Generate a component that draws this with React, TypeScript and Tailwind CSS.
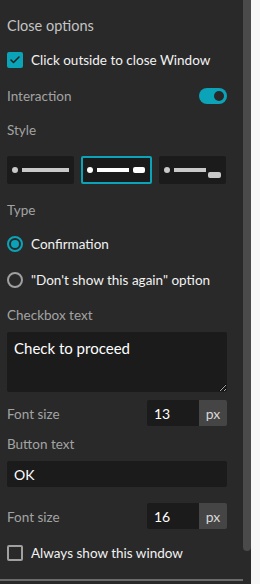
import { Check } from "lucide-react";

const font = { fontFamily: "Lato, 'Noto Sans', sans-serif" };

function StyleOption({ variant, selected }: { variant: 1 | 2 | 3; selected?: boolean }) {
  const c = selected ? "bg-white" : "bg-[#c9c9c9]";
  return (
    <div
      className={`relative h-[28px] rounded-[2px] bg-[#1b1b1b] ${
        selected ? "border-2 border-[#0ba3b8]" : ""
      }`}
    >
      {variant === 1 && (
        <div className="flex h-full items-center px-[5px] gap-[4px]">
          <span className={`h-[6px] w-[6px] rounded-full ${c}`} />
          <span className={`h-[4px] flex-1 ${c}`} />
        </div>
      )}
      {variant === 2 && (
        <div className="flex h-full items-center pl-[4px] pr-[5px] gap-[4px]">
          <span className={`h-[6px] w-[6px] rounded-full ${c}`} />
          <span className={`h-[4px] w-[32px] ${c}`} />
          <span className={`ml-auto h-[6px] w-[12px] rounded-[2px] ${c}`} />
        </div>
      )}
      {variant === 3 && (
        <>
          <div className="flex h-full items-center px-[5px] gap-[4px]">
            <span className={`h-[6px] w-[6px] rounded-full ${c}`} />
            <span className={`h-[4px] w-[32px] ${c}`} />
          </div>
          <span className={`absolute right-[5px] bottom-[6px] h-[6px] w-[13px] rounded-[2px] ${c}`} />
        </>
      )}
    </div>
  );
}

function Label({ children, className = "" }: { children: React.ReactNode; className?: string }) {
  return <div className={`h-[20px] flex items-center text-[13.5px] text-[#a3a3a3] ${className}`}>{children}</div>;
}

function FontSizeRow({ value, className = "" }: { value: string; className?: string }) {
  return (
    <div className={`flex h-[26px] items-center ${className}`}>
      <span className="text-[13.5px] text-[#a3a3a3] pt-[2px]">Font size</span>
      <div className="ml-auto flex h-full w-[80px] rounded-[2px] overflow-hidden">
        <div className="flex flex-1 items-center bg-[#1b1b1b] pl-[7px] text-[14px] text-white">{value}</div>
        <div className="flex w-[28px] items-center justify-center bg-[#454545] text-[14px] text-[#d8d8d8]">px</div>
      </div>
    </div>
  );
}

export default function App() {
  return (
    <div className="flex h-[584px] w-[260px] overflow-hidden" style={font}>
      <div className="flex w-[243px] flex-col bg-[#292929]">
        <div className="flex-1 pl-[7px] pr-[16px] pt-[14px]">
          <div className="h-[24px] flex items-center text-[14.5px] text-[#c4c4c4]">Close options</div>

          <div className="mt-[12px] flex h-[20px] items-center gap-[8px]">
            <span className="flex h-[16px] w-[16px] items-center justify-center rounded-[2px] bg-[#0ba3b8]">
              <Check className="h-[12px] w-[12px] text-[#1e1e1e]" strokeWidth={3} />
            </span>
            <span className="text-[13.5px] text-[#f2f2f2]">Click outside to close Window</span>
          </div>

          <div className="mt-[16px] flex h-[20px] items-center">
            <span className="text-[13.5px] text-[#a3a3a3]">Interaction</span>
            <span className="ml-auto flex h-[16px] w-[28px] items-center justify-end rounded-full bg-[#0ba3b8] pr-[3px]">
              <span className="h-[10px] w-[10px] rounded-full bg-[#282828]" />
            </span>
          </div>

          <Label className="mt-[14px]">Style</Label>
          <div className="mt-[16px] grid grid-cols-[67px_71px_67px] gap-[7px]">
            <StyleOption variant={1} />
            <StyleOption variant={2} selected />
            <StyleOption variant={3} />
          </div>

          <Label className="mt-[16px]">Type</Label>
          <div className="mt-[14px] flex h-[20px] items-center gap-[8px]">
            <span className="flex h-[16px] w-[16px] items-center justify-center rounded-full border-2 border-[#0ba3b8]">
              <span className="h-[8px] w-[8px] rounded-full bg-[#0ba3b8]" />
            </span>
            <span className="text-[13.5px] text-[#f2f2f2]">Confirmation</span>
          </div>
          <div className="mt-[16px] flex h-[20px] items-center gap-[8px]">
            <span className="h-[16px] w-[16px] rounded-full border-2 border-[#a0a0a0]" />
            <span className="text-[13.5px] text-[#f2f2f2]">"Don't show this again" option</span>
          </div>

          <Label className="mt-[15px]">Checkbox text</Label>
          <textarea
            defaultValue="Check to proceed"
            className="mt-[7px] block h-[60px] w-full rounded-[2px] bg-[#1b1b1b] px-[7px] pt-[5px] text-[15px] text-white outline-none"
            style={font}
          />

          <FontSizeRow value="13" className="mt-[8px]" />

          <Label className="mt-[8px]">Button text</Label>
          <div className="mt-[7px] flex h-[26px] items-center rounded-[2px] bg-[#1b1b1b] px-[7px] text-[14px] text-white">
            OK
          </div>

          <FontSizeRow value="16" className="mt-[16px]" />

          <div className="mt-[14px] flex h-[20px] items-center gap-[8px]">
            <span className="h-[16px] w-[16px] rounded-[2px] border-2 border-[#a0a0a0]" />
            <span className="text-[13.5px] text-[#f2f2f2]">Always show this window</span>
          </div>
        </div>
        <div className="h-[2px] bg-[#6b6b6b] mb-[3px]" />
      </div>
      <div className="w-[8px] bg-[#292929]">
        <div className="h-[551px] rounded-b-[4px] bg-[#4a4a4a]" />
      </div>
      <div className="w-[9px] bg-[#f7f7f7]" />
    </div>
  );
}
